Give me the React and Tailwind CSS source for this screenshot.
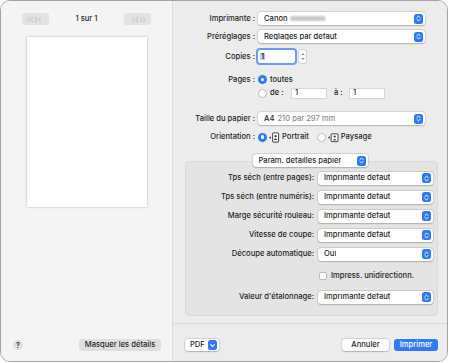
import React from 'react';

const font = { fontFamily: 'Inter, "Liberation Sans", sans-serif' };

function BlueStepper({ down }) {
  return (
    <span className="flex h-[10px] w-[9px] shrink-0 items-center justify-center rounded-[2.5px] bg-[#2f7bf5]">
      <svg viewBox="0 0 8 10" className="h-[9px] w-[7px]">
        {down ? (
          <path d="M2 4 L4 6.2 L6 4" stroke="white" strokeWidth="1.2" fill="none" strokeLinecap="round" strokeLinejoin="round" />
        ) : (
          <path d="M2.2 4 L4 2.2 L5.8 4 M2.2 6 L4 7.8 L5.8 6" stroke="white" strokeWidth="1.1" fill="none" strokeLinecap="round" strokeLinejoin="round" />
        )}
      </svg>
    </span>
  );
}

function Popup({ children, className = '' }) {
  return (
    <div
      className={
        'flex h-[13px] items-center justify-between rounded-[3px] bg-white pl-[6px] pr-[2px] shadow-[0_0_0_0.5px_rgba(0,0,0,0.14),0_0.5px_1.5px_rgba(0,0,0,0.18)] ' +
        className
      }
    >
      <span className="flex items-center truncate">{children}</span>
      <BlueStepper />
    </div>
  );
}

function Radio({ on }) {
  return on ? (
    <span className="flex h-[9px] w-[9px] shrink-0 items-center justify-center rounded-full bg-[#2f7bf5]">
      <span className="h-[3.5px] w-[3.5px] rounded-full bg-white" />
    </span>
  ) : (
    <span className="block h-[9px] w-[9px] shrink-0 rounded-full border border-[#bdbdbd] bg-white" />
  );
}

function Field({ children, className = '' }) {
  return (
    <div className={'flex h-[11px] items-center border border-[#d6d6d6] bg-white pl-[3px] ' + className}>
      {children}
    </div>
  );
}

function Row({ label, children, className = '' }) {
  return (
    <div className={'flex items-center ' + className}>
      <div className="w-[85px] pr-[3px] text-right">{label}</div>
      {children}
    </div>
  );
}

function BoxRow({ label, value, className = '' }) {
  return (
    <div className={'flex h-[12px] items-center ' + className}>
      <div className="w-[132px] pr-[4px] text-right">{label}</div>
      <Popup className="h-[12px] w-[115px]">{value}</Popup>
    </div>
  );
}

function OrientIcon({ landscape }) {
  return (
    <svg viewBox="0 0 13 12" className="block h-[11px] w-[12px]">
      <path d="M1 6 L3 4.5 L3 7.5 Z" fill="#333" />
      {landscape ? (
        <>
          <rect x="4.5" y="2" width="7.5" height="8.5" rx="0.6" stroke="#333" strokeWidth="1" fill="white" />
          <circle cx="8.3" cy="5" r="1.2" fill="#333" />
          <path d="M6.2 9 Q8.3 6.2 10.4 9 Z" fill="#333" />
        </>
      ) : (
        <>
          <rect x="5" y="1" width="6.5" height="10" rx="0.6" stroke="#333" strokeWidth="1" fill="white" />
          <circle cx="8.25" cy="4.6" r="1.2" fill="#333" />
          <path d="M6.4 8.6 Q8.25 5.8 10.1 8.6 Z" fill="#333" />
        </>
      )}
    </svg>
  );
}

function NavButton({ left }) {
  return (
    <div className="flex h-[12px] w-[27px] items-center justify-center rounded-[3px] bg-[#e3e3e3]">
      <svg viewBox="0 0 22 10" className="h-[9px] w-[21px]">
        {left ? (
          <path d="M5 2 L2 5 L5 8 M8.5 2 L5.5 5 L8.5 8 M11.5 1.5 L11.5 8.5 M17 2 L14 5 L17 8" stroke="#bcbcbc" strokeWidth="1" fill="none" />
        ) : (
          <path d="M5 2 L8 5 L5 8 M10.5 1.5 L10.5 8.5 M13.5 2 L16.5 5 L13.5 8 M17 2 L20 5 L17 8" stroke="#bcbcbc" strokeWidth="1" fill="none" />
        )}
      </svg>
    </div>
  );
}

export default function App() {
  return (
    <div className="bg-white" style={font}>
      <div className="flex h-[362px] w-[448px] overflow-hidden rounded-[10px] border border-[#a3a3a3] text-[7.6px] font-medium leading-none text-[#1f1f1f]">
        {/* Preview side */}
        <div className="flex w-[172px] shrink-0 flex-col border-r border-[#dcdcdc] bg-[#f4f4f4]">
          <div className="mt-[12px] flex items-center justify-between px-[21px]">
            <NavButton left />
            <span>1 sur 1</span>
            <NavButton />
          </div>
          <div className="ml-[26px] mt-[12px] h-[170px] w-[120px] bg-white shadow-[0_0_2px_rgba(0,0,0,0.28)]" />
          <div className="mt-auto mb-[10px] flex items-center justify-between pl-[12px] pr-[11px]">
            <span className="flex h-[10px] w-[10px] items-center justify-center rounded-full bg-[#dfdfdf] text-[7px] font-semibold">?</span>
            <span className="flex h-[12px] w-[82px] items-center justify-center rounded-[3px] bg-[#dfdfdf]">Masquer les détails</span>
          </div>
        </div>

        {/* Settings side */}
        <div className="flex flex-1 flex-col bg-[#ececec]">
          <div className="flex flex-col pt-[11px]">
            <Row label="Imprimante :">
              <Popup className="w-[167px]">
                Canon
                <span className="ml-[2px] h-[5px] w-[36px] rounded bg-[#c9c9c9] blur-[1.2px]" />
              </Popup>
            </Row>
            <Row label="Préréglages :" className="mt-[5px]">
              <Popup className="w-[167px]">Réglages par défaut</Popup>
            </Row>
            <Row label="Copies :" className="mt-[7px]">
              <div className="flex h-[13px] w-[37px] items-center rounded-[2px] bg-white pl-[2px] ring-2 ring-[#6b9cf2]">
                <span className="bg-[#b4cdf8] px-[1px] text-[#111]">1</span>
              </div>
              <span className="ml-[4px] flex h-[13px] w-[7px] flex-col items-center justify-center rounded-[2px] bg-white shadow-[0_0_0_0.5px_rgba(0,0,0,0.2)]">
                <svg viewBox="0 0 6 12" className="h-[11px] w-[6px]">
                  <path d="M1.5 4.5 L3 3 L4.5 4.5 M1.5 7.5 L3 9 L4.5 7.5" stroke="#444" strokeWidth="0.9" fill="none" />
                </svg>
              </span>
            </Row>
            <Row label="Pages :" className="mt-[11px] h-[11px]">
              <Radio on />
              <span className="ml-[3px]">toutes</span>
            </Row>
            <Row label="" className="mt-[2px] h-[12px]">
              <Radio />
              <span className="ml-[3px] w-[21px]">de :</span>
              <Field className="w-[36px]">1</Field>
              <span className="ml-[7px] w-[15px]">à :</span>
              <Field className="w-[36px]">1</Field>
            </Row>
            <Row label="Taille du papier :" className="mt-[13px]">
              <Popup className="h-[12px] w-[167px]">
                A4<span className="ml-[3px] text-[#8c8c8c]">210 par 297 mm</span>
              </Popup>
            </Row>
            <Row label="Orientation :" className="mt-[6px] h-[12px]">
              <Radio on />
              <span className="ml-[1px]"><OrientIcon /></span>
              <span className="ml-[2px]">Portrait</span>
              <span className="ml-[8px]"><Radio /></span>
              <span className="ml-[1px]"><OrientIcon landscape /></span>
              <span className="ml-[2px]">Paysage</span>
            </Row>
            <div className="relative z-10 mt-[11px] flex justify-center">
              <Popup className="h-[12px] w-[115px]">Param. détaillés papier</Popup>
            </div>
            <div className="-mt-[6px] ml-[12px] mr-[9px] flex flex-col rounded-[4px] border border-[#dadada] bg-[#e4e4e4] pb-[12px] pt-[10px]">
              <BoxRow label="Tps séch (entre pages):" value="Imprimante défaut" />
              <BoxRow label="Tps séch (entre numéris):" value="Imprimante défaut" className="mt-[7px]" />
              <BoxRow label="Marge sécurité rouleau:" value="Imprimante défaut" className="mt-[7px]" />
              <BoxRow label="Vitesse de coupe:" value="Imprimante défaut" className="mt-[7px]" />
              <BoxRow label="Découpe automatique:" value="Oui" className="mt-[7px]" />
              <div className="mt-[11px] flex h-[9px] items-center pl-[133px]">
                <span className="h-[8px] w-[8px] rounded-[2px] border border-[#bcbcbc] bg-white" />
                <span className="ml-[4px]">Impress. unidirectionn.</span>
              </div>
              <BoxRow label="Valeur d'étalonnage:" value="Imprimante défaut" className="mt-[11px]" />
            </div>
          </div>

          <div className="mt-auto flex h-[38px] items-start border-t border-[#d8d8d8] pl-[12px] pr-[9px] pt-[15px]">
            <div className="flex h-[12px] w-[34px] items-center justify-between rounded-[3px] bg-white pl-[5px] pr-[2px] shadow-[0_0_0_0.5px_rgba(0,0,0,0.14),0_0.5px_1.5px_rgba(0,0,0,0.18)]">
              <span>PDF</span>
              <BlueStepper down />
            </div>
            <div className="ml-auto flex h-[12px] w-[47px] items-center justify-center rounded-[3px] bg-white shadow-[0_0_0_0.5px_rgba(0,0,0,0.14),0_0.5px_1.5px_rgba(0,0,0,0.18)]">
              Annuler
            </div>
            <div className="ml-[5px] flex h-[12px] w-[44px] items-center justify-center rounded-[3px] bg-[#2f7bf5] text-white">
              Imprimer
            </div>
          </div>
        </div>
      </div>
    </div>
  );
}
